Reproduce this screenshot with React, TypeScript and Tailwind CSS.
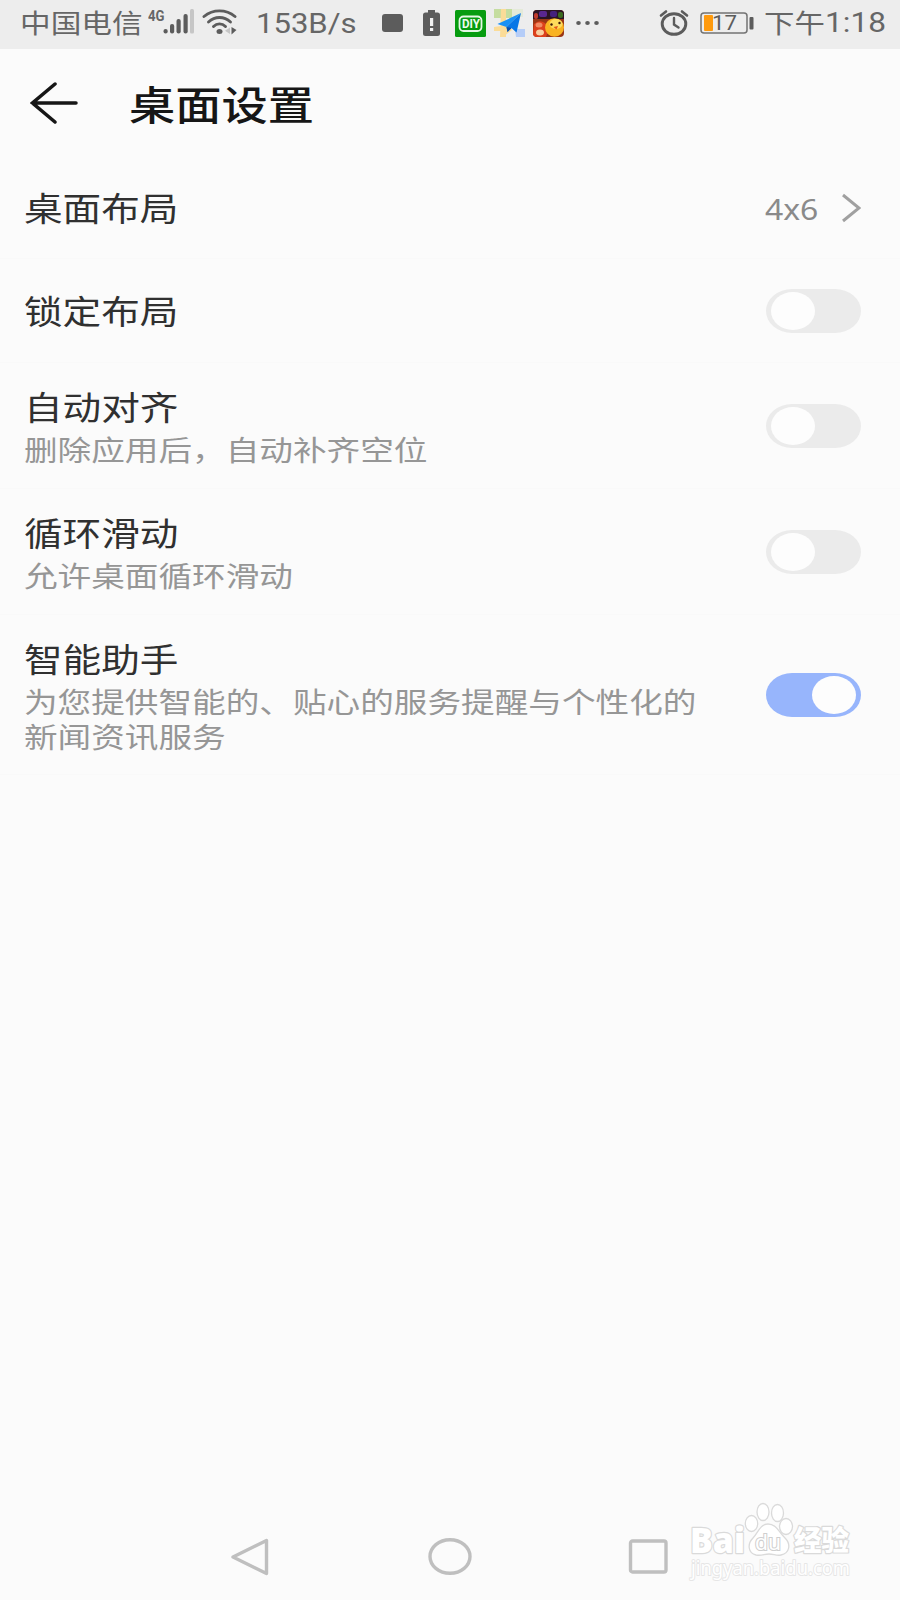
import { useState } from "react"
import clsx from "clsx"

interface SettingItem {
    id: string
    title: string
    lines?: string[]
    height: string
    enabled?: boolean
    value?: string
}

const settings: SettingItem[] = [
    { id: "layout", title: "桌面布局", height: "h-[101px]", value: "4x6" },
    { id: "lock", title: "锁定布局", height: "h-[104px]", enabled: false },
    { id: "align", title: "自动对齐", lines: ["删除应用后，自动补齐空位"], height: "h-[126px]", enabled: false },
    { id: "loop", title: "循环滑动", lines: ["允许桌面循环滑动"], height: "h-[126px]", enabled: false },
    {
        id: "assistant",
        title: "智能助手",
        lines: ["为您提供智能的、贴心的服务提醒与个性化的", "新闻资讯服务"],
        height: "h-[160px]",
        enabled: true,
    },
]

function SignalIcon() {
    return (
        <svg className="ml-[6px] shrink-0" width="48" height="30" viewBox="0 0 48 30">
            <text x="0" y="12.500" fontSize="15" fontWeight="700" fill="#666" textLength="16.500" lengthAdjust="spacingAndGlyphs" fontFamily="Roboto, sans-serif">4G</text>
            <g fill="#5c5c5c">
                <rect x="15.500" y="21" width="4.200" height="4.500" rx="2" />
                <rect x="22" y="16" width="4.200" height="9.500" rx="2" />
                <rect x="28.500" y="11" width="4.200" height="14.500" rx="2" />
                <rect x="35.500" y="6" width="4.200" height="19.500" rx="2" />
                <rect x="42" y="1" width="4" height="24.500" rx="1.500" fill="#c6c6c6" />
            </g>
        </svg>
    )
}

function WifiIcon() {
    return (
        <svg className="ml-[6px] shrink-0" width="36" height="30" viewBox="0 0 36 30">
            <g fill="none" stroke="#5c5c5c" strokeWidth="2.900" strokeLinecap="round">
                <path d="M2 8.500C11 1 24 1 33 8.500" />
                <path d="M6.500 14C13 8 22 8 28.500 14" />
                <path d="M11.500 18.500C15 15 20 15 23.500 18.500" />
            </g>
            <ellipse cx="17.500" cy="23.500" rx="3" ry="2.500" fill="#5c5c5c" />
            <path d="M28 19.500v6.500l-5-3.200z" fill="#c6c6c6" />
            <path d="M29.500 19v7.500l5-4.500z" fill="#5c5c5c" />
        </svg>
    )
}

function DiyIcon() {
    return (
        <svg className="ml-[15px] shrink-0" width="31" height="27" viewBox="0 0 31 27">
            <rect width="31" height="27" rx="1.500" fill="#079c10" />
            <rect x="4.500" y="6.500" width="22" height="14.500" rx="4" fill="none" stroke="#e4f7e4" strokeWidth="1.800" />
            <text x="7" y="18" fontSize="12" fontWeight="700" fill="#eefaee" textLength="18" lengthAdjust="spacingAndGlyphs" fontFamily="Roboto, sans-serif">DIY</text>
        </svg>
    )
}

function PlaneIcon() {
    return (
        <svg className="ml-[8px] shrink-0" width="31" height="28" viewBox="0 0 31 28">
            <rect x="0" y="0" width="18" height="9" fill="#c5dda0" />
            <path d="M18 0h11v8h-11z" fill="#e4ead9" />
            <path d="M7 0h5v28h-6zM0 18l14-2 4 5-9 7H7v-6H0z" fill="#fbdc98" />
            <path d="M21 20h10v8h-9z" fill="#b5cdf8" />
            <path d="M27 4L3.500 15l9 3z" fill="#1a91f5" />
            <path d="M27 4L12.500 18l1 5 4-4 5 4.500z" fill="#0876e6" />
            <path d="M12.500 18l5 1-4 4z" fill="#0a4fae" />
        </svg>
    )
}

function GameIcon() {
    return (
        <svg className="ml-[8px] shrink-0" width="31" height="27" viewBox="0 0 31 27">
            <rect width="31" height="27" rx="4" fill="#9a3615" />
            <path d="M0 8V4q0-4 4-4h23q4 0 4 4v5H0z" fill="#2b1424" />
            <rect x="6" y="1" width="8" height="6" rx="2" fill="#5a2790" />
            <rect x="17" y="1" width="7" height="6" rx="2" fill="#44217d" />
            <rect x="25" y="2" width="5" height="6" rx="2" fill="#3b6b1f" />
            <rect x="1" y="3" width="4" height="6" rx="2" fill="#c0392b" />
            <path d="M1 14q5-5 11-1l4 6-3 8H4q-4 0-4-4z" fill="#dc401c" />
            <ellipse cx="6" cy="15" rx="3.500" ry="2.500" fill="#f08a62" />
            <ellipse cx="7" cy="22.500" rx="4" ry="3" fill="#f9cfa0" />
            <ellipse cx="21.500" cy="17.500" rx="9.500" ry="9.300" fill="#f9b322" />
            <ellipse cx="23" cy="14" rx="6.500" ry="5" fill="#fddc5d" />
            <ellipse cx="18.500" cy="14.500" rx="1.200" ry="1.300" fill="#3b1a08" />
            <ellipse cx="26.500" cy="13" rx="1.200" ry="1.300" fill="#3b1a08" />
            <path d="M20.500 17l4.500-1-1.500 3.500z" fill="#e2571a" />
        </svg>
    )
}

function AlarmIcon() {
    return (
        <svg className="ml-[59px] shrink-0" width="30" height="28" viewBox="0 0 30 28">
            <g fill="none" stroke="#5c5c5c" strokeLinecap="round">
                <ellipse cx="15" cy="15" rx="11.800" ry="10.300" strokeWidth="2.900" />
                <path d="M15 9v6.500l4.500 3" strokeWidth="2.400" />
                <path d="M2 6.500L7 2.500M28 6.500L23 2.500" strokeWidth="2.600" />
            </g>
        </svg>
    )
}

function StatusBar() {
    return (
        <header className="flex h-[49px] items-center bg-[#ededed] pb-[3px] pl-[20px] text-[26px] leading-none text-[#666]">
            <div className="w-[122px] shrink-0 pb-[2px] whitespace-nowrap">
                <span className="inline-block origin-left scale-x-[1.18]">中国电信</span>
            </div>
            <SignalIcon />
            <WifiIcon />
            <div className="ml-[18px] w-[106px] shrink-0 pt-[2px] font-[Roboto] text-[27px]">
                <span className="inline-block origin-left scale-x-[1.15]">153B/s</span>
            </div>
            <div className="ml-[20px] h-[18px] w-[21px] shrink-0 rounded-[3px] bg-[#5c5c5c]" />
            <svg className="ml-[20px] shrink-0" width="17" height="26" viewBox="0 0 17 26">
                <path d="M5 0h7v2.500h2.500q2.500 0 2.500 2.500v18.500q0 2.500-2.500 2.500h-12Q0 26 0 23.500V5q0-2.500 2.500-2.500H5z" fill="#5c5c5c" />
                <path d="M7 8h3.200v8H7zM7 18h3.200v3H7z" fill="#f0f0f0" />
            </svg>
            <DiyIcon />
            <PlaneIcon />
            <GameIcon />
            <svg className="ml-[12px] shrink-0" width="24" height="6" viewBox="0 0 24 6" fill="#5c5c5c">
                <ellipse cx="2.500" cy="3" rx="2.300" ry="2" />
                <ellipse cx="11.500" cy="3" rx="2.300" ry="2" />
                <ellipse cx="20.500" cy="3" rx="2.300" ry="2" />
            </svg>
            <AlarmIcon />
            <svg className="ml-[11px] shrink-0" width="54" height="24" viewBox="0 0 54 24">
                <rect x="1" y="2" width="46" height="20" rx="3" fill="none" stroke="#737373" strokeWidth="1.500" />
                <rect x="4" y="4" width="9" height="16" rx="1" fill="#ff9a0d" />
                <rect x="49.500" y="6" width="4" height="12.500" rx="1" fill="#5c5c5c" />
                <text x="12" y="19" fontSize="20" fill="#5c5c5c" textLength="25" lengthAdjust="spacingAndGlyphs" fontFamily="Roboto, sans-serif">17</text>
            </svg>
            <div className="ml-[10px] flex whitespace-nowrap">
                <div className="w-[61px] pb-[2px]">
                    <span className="inline-block origin-left scale-x-[1.17]">下午</span>
                </div>
                <span className="inline-block origin-left scale-x-[1.17] pt-px font-[Roboto] text-[27px]">1:18</span>
            </div>
        </header>
    )
}

function Toggle({ checked, onChange }: { checked: boolean; onChange: () => void }) {
    return (
        <button
            role="switch"
            aria-checked={checked}
            onClick={onChange}
            className={clsx(
                "flex h-[44px] w-[95px] shrink-0 items-center rounded-[26px/22px] px-[5px]",
                checked ? "justify-end bg-[#97b5fc]" : "justify-start bg-[#ebebeb]"
            )}
        >
            <span className="h-[38px] w-[44px] rounded-[50%] bg-[#fdfdfd]" />
        </button>
    )
}

function SettingRow({ item }: { item: SettingItem }) {
    const [checked, setChecked] = useState(!!item.enabled)

    return (
        <div className={clsx("flex items-center justify-between border-b border-[#f9f9f9] pr-[39px] pl-[24px]", item.height)}>
            <div className="flex w-[700px] flex-col whitespace-nowrap">
                <div className={clsx("origin-left scale-x-[1.17] text-[33px] leading-[42px] text-[#303030]", item.lines ? "h-[46px]" : "h-[44px]")}>
                    {item.title}
                </div>
                {item.lines?.map(line => (
                    <div key={line} className="h-[34.500px] origin-left scale-x-[1.172] text-[28.700px] leading-[35.500px] text-[#969696]">
                        {line}
                    </div>
                ))}
            </div>
            {item.value ? (
                <div className="flex items-center">
                    <div className="w-[77px] font-['Noto_Sans'] text-[29px] leading-none text-[#8a8a8a]">
                        <span className="inline-block origin-left scale-x-[1.1]">{item.value}</span>
                    </div>
                    <svg width="19" height="30" viewBox="0 0 19 30" fill="none" stroke="#a0a0a0" strokeWidth="3">
                        <path d="M1 2l16 13L1 28" />
                    </svg>
                </div>
            ) : (
                <Toggle checked={checked} onChange={() => setChecked(!checked)} />
            )}
        </div>
    )
}

function Watermark() {
    return (
        <svg className="absolute top-[15px] left-[684px] overflow-visible" width="176" height="90" viewBox="0 0 176 90">
            <g fill="#fff" stroke="#dadada" strokeWidth="1.300" strokeLinejoin="round">
                <text x="6" y="57.500" fontSize="36" fontWeight="800" strokeWidth="2.400" paintOrder="stroke" textLength="55" lengthAdjust="spacingAndGlyphs" fontFamily="Open Sans, sans-serif">Bai</text>
                <ellipse cx="67.500" cy="28.500" rx="6.200" ry="8" />
                <ellipse cx="79" cy="17" rx="6" ry="8.500" />
                <ellipse cx="93.500" cy="18" rx="6" ry="8.500" />
                <ellipse cx="102" cy="31.500" rx="6.500" ry="8" />
                <path d="M84 29C76 29 74 38 69 43C63 49 64 58 72 60C78 61 80 59 85 59C90 59 92 61 97 60C106 58 107 49 101 43C95 37 92 29 84 29Z" />
                <text x="110" y="56" fontSize="28" fontWeight="900" strokeWidth="2.400" paintOrder="stroke" textLength="55" lengthAdjust="spacingAndGlyphs" fontFamily="Noto Sans CJK SC, sans-serif">经验</text>
                <text x="7" y="80" fontSize="20" strokeWidth="2" paintOrder="stroke" stroke="#e6e6e6" textLength="159" lengthAdjust="spacingAndGlyphs" fontFamily="Noto Sans, sans-serif">jingyan.baidu.com</text>
            </g>
            <text x="71" y="54.500" fontSize="22" fill="#fff" stroke="#cfcfcf" strokeWidth="2.200" paintOrder="stroke" textLength="26" lengthAdjust="spacingAndGlyphs" fontFamily="Noto Sans, sans-serif">du</text>
        </svg>
    )
}

function NavBar() {
    return (
        <nav className="relative flex h-[120px] items-center pt-[33px] pl-[230px]">
            <svg width="40" height="40" viewBox="0 0 40 40" fill="none" stroke="#bfbfbf" strokeWidth="3.400" strokeLinejoin="round">
                <path d="M3 20L36.500 3.500V36.500Z" />
            </svg>
            <svg className="ml-[156px]" width="48" height="40" viewBox="0 0 48 40" fill="none" stroke="#bfbfbf" strokeWidth="3.400">
                <ellipse cx="24" cy="19.500" rx="20" ry="16.800" />
            </svg>
            <svg className="ml-[152px]" width="44" height="40" viewBox="0 0 44 40" fill="none" stroke="#bfbfbf" strokeWidth="3.400">
                <rect x="4.500" y="4" width="35.500" height="31" rx="2" />
            </svg>
            <Watermark />
        </nav>
    )
}

export default function App() {
    return (
        <div className="flex h-[1600px] w-[900px] flex-col overflow-hidden bg-[#fbfbfb] font-['Noto_Sans_CJK_SC',sans-serif]">
            <StatusBar />
            <div className="flex h-[109px] items-center pb-[2px] pl-[30px]">
                <svg width="50" height="44" viewBox="0 0 50 44" fill="none" stroke="#161616" strokeWidth="3.500" strokeLinecap="round">
                    <path d="M25 3L2.500 22L25 41M2.500 22H46" />
                </svg>
                <h1 className="ml-[49px] origin-left scale-x-[1.17] text-[39.500px] leading-none font-medium text-[#161616]">桌面设置</h1>
            </div>
            <main className="flex-1">
                {settings.map(item => (
                    <SettingRow key={item.id} item={item} />
                ))}
            </main>
            <NavBar />
        </div>
    )
}
